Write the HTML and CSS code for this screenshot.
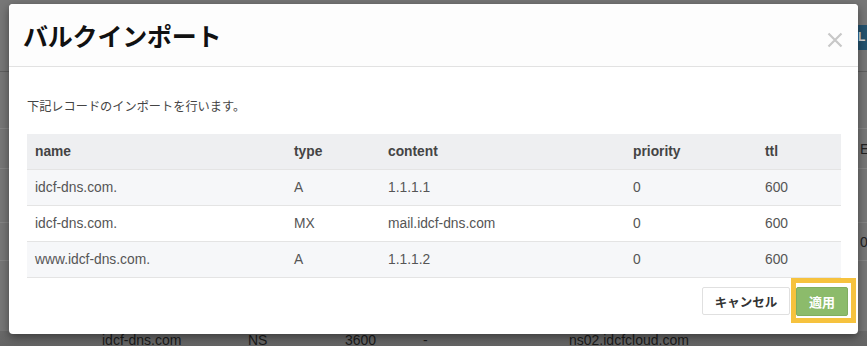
FILE: index.html
```html
<!DOCTYPE html>
<html lang="ja">
<head>
<meta charset="utf-8">
<title>バルクインポート</title>
<link rel="stylesheet" href="styles.css">
</head>
<body>
<div class="page">
  <div class="page-top">
    <span class="page-btn">L</span>
  </div>
  <div class="page-row page-row-a"></div>
  <div class="page-row page-row-b"><span class="page-cell-right">E:</span></div>
  <div class="page-row page-row-c"></div>
  <div class="page-row page-row-d"><span class="page-cell-right">0</span></div>
  <div class="page-row page-row-e"></div>
  <div class="page-row page-row-last">
    <span class="bg-c1">idcf-dns.com</span>
    <span class="bg-c2">NS</span>
    <span class="bg-c3">3600</span>
    <span class="bg-c4">-</span>
    <span class="bg-c5">ns02.idcfcloud.com</span>
  </div>
</div>

<div class="modal">
  <div class="modal-header">
    <h1 class="modal-title">バルクインポート</h1>
    <span class="modal-close" aria-label="close">
      <svg width="16" height="16" viewBox="0 0 16 16"><path d="M1.5 1.5 L14.5 14.5 M14.5 1.5 L1.5 14.5" stroke="#c8c8c8" stroke-width="2.2" fill="none"/></svg>
    </span>
  </div>
  <div class="modal-body">
    <p class="intro">下記レコードのインポートを行います。</p>
    <table class="records">
      <thead>
        <tr><th class="c-name">name</th><th class="c-type">type</th><th class="c-content">content</th><th class="c-prio">priority</th><th class="c-ttl">ttl</th></tr>
      </thead>
      <tbody>
        <tr><td>idcf-dns.com.</td><td>A</td><td>1.1.1.1</td><td>0</td><td>600</td></tr>
        <tr><td>idcf-dns.com.</td><td>MX</td><td>mail.idcf-dns.com</td><td>0</td><td>600</td></tr>
        <tr><td>www.idcf-dns.com.</td><td>A</td><td>1.1.1.2</td><td>0</td><td>600</td></tr>
      </tbody>
    </table>
  </div>
  <div class="modal-footer">
    <button class="btn btn-cancel">キャンセル</button>
    <span class="highlight"><button class="btn btn-apply">適用</button></span>
  </div>
</div>
</body>
</html>
```

FILE: styles.css
```css
html, body {
  margin: 0;
  padding: 0;
}
body {
  width: 867px;
  height: 346px;
  overflow: hidden;
  background: #777777;
  font-family: "Liberation Sans", "Noto Sans CJK JP", sans-serif;
  position: relative;
}

/* dimmed page behind the dialog */
.page {
  color: #1e1e1e;
  font-size: 14px;
}
.page-top {
  height: 72px;
  border-bottom: 1px solid #5f5f5f;
  display: flex;
  justify-content: flex-end;
  align-items: flex-start;
  box-sizing: border-box;
}
.page-btn {
  margin-top: 25px;
  width: 12px;
  height: 25px;
  background: #24536f;
  color: #d8d8d8;
  font-size: 12px;
  font-weight: bold;
  line-height: 25px;
  padding-left: 3px;
  box-sizing: border-box;
}
.page-row {
  border-bottom: 1px solid #858585;
  display: flex;
  justify-content: flex-end;
  align-items: center;
}
.page-row-a { height: 56px; }
.page-row-b { height: 39px; }
.page-row-c { height: 53px; }
.page-row-d { height: 37px; }
.page-row-e { height: 70px; border-bottom: none; }
.page-cell-right {
  width: 7px;
  overflow: hidden;
  white-space: nowrap;
  font-size: 14px;
  color: #222;
}
.page-row-last {
  height: 30px;
  border: none;
  justify-content: flex-start;
  align-items: flex-start;
  padding-top: 1px;
  box-sizing: border-box;
  background: linear-gradient(#6a6a6a, #5e5e5e);
  color: #1a1a1a;
  font-size: 14px;
}
.bg-c1 { margin-left: 102px; width: 146px; }
.bg-c2 { width: 97px; }
.bg-c3 { width: 78px; }
.bg-c4 { width: 146px; }

/* dialog */
.modal {
  position: absolute;
  left: 9px;
  top: 4px;
  width: 849px;
  height: 330px;
  background: #ffffff;
  border-radius: 4px;
  box-shadow: 0 3px 10px rgba(0, 0, 0, 0.45);
  display: flex;
  flex-direction: column;
  box-sizing: border-box;
}
.modal-header {
  height: 63px;
  box-sizing: border-box;
  border-bottom: 1px solid #e2e2e2;
  background: #fdfdfd;
  border-radius: 4px 4px 0 0;
  display: flex;
  justify-content: space-between;
  align-items: center;
  padding: 0 15px 0 14px;
}
.modal-title {
  margin: 0;
  font-family: "Noto Sans CJK JP", sans-serif;
  font-size: 25px;
  font-weight: bold;
  color: #111111;
  line-height: 1;
  letter-spacing: -0.2px;
}
.modal-close {
  align-self: flex-start;
  margin-top: 28px;
  display: flex;
}
.modal-body {
  padding: 30px 17px 0 18px;
}
.intro {
  margin: 0 0 19px 0;
  font-family: "Noto Sans CJK JP", sans-serif;
  font-size: 12.2px;
  line-height: 18px;
  color: #444444;
}
.records {
  width: 814px;
  border-collapse: collapse;
  table-layout: fixed;
  font-size: 13.8px;
  color: #555555;
}
.records th, .records td {
  height: 35px;
  padding: 0 8px;
  text-align: left;
  border-bottom: 1px solid #e4e4e4;
  white-space: nowrap;
}
.records th {
  background: #eeeff1;
  color: #444444;
  font-weight: bold;
}
.records tbody tr:nth-child(odd) td {
  background: #f6f7f9;
}
.c-name { width: 243px; }
.c-type { width: 78px; }
.c-content { width: 229px; }
.c-prio { width: 116px; }
.c-ttl { width: 68px; }

.modal-footer {
  display: flex;
  justify-content: flex-end;
  align-items: flex-start;
  padding: 0 2px 0 0;
}
.btn {
  font-family: "Noto Sans CJK JP", sans-serif;
  font-weight: bold;
  border-radius: 2px;
  cursor: pointer;
  padding: 0;
  box-sizing: border-box;
}
.btn-cancel {
  margin-top: 9px;
  margin-right: 1px;
  width: 88px;
  height: 28px;
  background: #ffffff;
  border: 1px solid #e0e0e0;
  color: #333333;
  font-size: 12.5px;
}
.highlight {
  display: flex;
  border: 5px solid #f6c23e;
  padding: 4px 3px 2px 0;
}
.btn-apply {
  width: 52px;
  height: 29px;
  background: #8cbb6b;
  border: 1px solid #80ae60;
  color: #ffffff;
  font-size: 13px;
}
```
